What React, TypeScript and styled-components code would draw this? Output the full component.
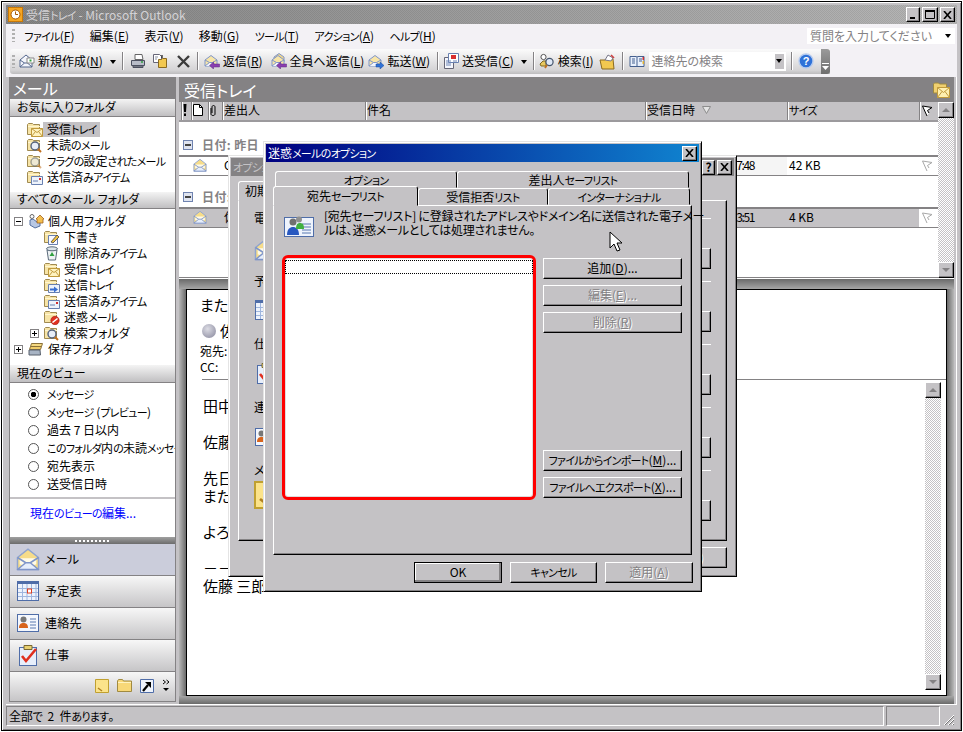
import React from "react";
import styled, { createGlobalStyle, css } from "styled-components";

const Grey = "#c4c2c5";
const Dark = "#848284";
const Chrome = "#f3f1f5";

const GlobalStyle = createGlobalStyle`
  html, body {
    margin: 0;
    background: #fff;
    overflow: hidden;
  }
  body {
    font-family: "Noto Sans CJK JP", "Liberation Sans", sans-serif;
    font-size: 12px;
    line-height: 14px;
    font-feature-settings: "palt";
    color: #000;
  }
  u { text-underline-offset: 1px; }
`;

const raised = css`
  border: 1px solid;
  border-color: #fff #000 #000 #fff;
  box-shadow: inset -1px -1px 0 ${Dark};
  box-sizing: border-box;
  background: ${Grey};
`;

// the bitmap UI font of the reference sets kana much narrower than Noto
const KanaRun = styled.span`
  font-size: 11px;
  letter-spacing: -0.7px;
`;

const Jp = ({ text }: { text: string }) => (
  <>
    {text.split(/([ぁ-んァ-ヶー]+)/).map((part, i) =>
      i % 2 === 1 && part !== "フォルダ" ? <KanaRun key={i}>{part}</KanaRun> : part
    )}
  </>
);

/* ---------- window chrome ---------- */

const Frame = styled.div`
  position: relative;
  width: 961px;
  height: 730px;
  margin: 1px;
  padding: 3px 4px 3px;
  box-sizing: border-box;
  border: 1px solid #000;
  background: ${Grey};
  box-shadow: inset 1px 1px 0 #fff, inset -1px -1px 0 ${Dark};
  display: flex;
  flex-direction: column;
  overflow: hidden;
`;

const TitleBar = styled.div`
  height: 19px;
  flex: none;
  display: flex;
  align-items: center;
  padding-left: 2px;
  gap: 3px;
  color: #d4d2d5;
  background: repeating-conic-gradient(rgba(0, 0, 0, 0.08) 0 25%, transparent 0 50%) 0 0 / 2px 2px,
    linear-gradient(90deg, #858585, #b6b6b6);
`;

const WindowButtons = styled.div`
  margin-left: auto;
  display: flex;
  gap: 2px;
  padding-right: 2px;
`;

const CaptionButton = styled.div<{ $w?: number }>`
  ${raised}
  width: ${(p) => p.$w ?? 15}px;
  height: 15px;
  display: flex;
  align-items: center;
  justify-content: center;
  flex: none;
  font-weight: 700;
  color: #000;
`;

const MenuBar = styled.div`
  height: 24px;
  flex: none;
  display: flex;
  align-items: center;
  background: ${Chrome};
  padding: 0 0 1px 6px;
  box-sizing: border-box;
  gap: 15.4px;
`;

const Grip = styled.div`
  width: 3px;
  height: 13px;
  margin-right: -6px;
  flex: none;
  background: repeating-linear-gradient(180deg, #b0b0b0 0 2px, transparent 2px 4px);
`;

const ToolGrip = styled(Grip)`
  margin-right: 4px;
`;

const HelpBox = styled.div`
  margin-left: auto;
  margin-right: 2px;
  width: 148px;
  height: 16px;
  background: #fff;
  color: ${Dark};
  display: flex;
  align-items: center;
  padding-left: 3px;
  box-sizing: border-box;
`;

const DownArrow = styled.span<{ $flush?: boolean }>`
  width: 0;
  height: 0;
  flex: none;
  border: 3px solid transparent;
  border-top: 4px solid #000;
  border-bottom: 0;
  margin-left: ${(p) => (p.$flush ? "0" : "auto")};
  margin-right: ${(p) => (p.$flush ? "0" : "4px")};
`;

const ToolStrip = styled.div`
  height: 29px;
  flex: none;
  background: ${Chrome};
  padding: 1px 0 3px 4px;
  box-sizing: border-box;
`;

const Toolbar = styled.div`
  width: 820px;
  height: 25px;
  display: flex;
  align-items: center;
  position: relative;
  padding: 0 0 1px 2px;
  box-sizing: border-box;
  border-radius: 3px 0 0 3px;
  background: linear-gradient(180deg, #fbfbfb, #d4d3d5 85%, #bdbcbe);
`;

const ToolButton = styled.div<{ $mr?: number }>`
  display: flex;
  align-items: center;
  gap: 3px;
  margin-right: ${(p) => p.$mr ?? 8}px;
  white-space: nowrap;
  flex: none;
`;

const ToolSep = styled.div<{ $mr?: number }>`
  width: 1px;
  height: 18px;
  background: ${Dark};
  box-shadow: 1px 0 0 #fff;
  margin-right: ${(p) => p.$mr ?? 6}px;
  flex: none;
`;

const ToolArrow = styled.span`
  width: 0;
  height: 0;
  border: 3px solid transparent;
  border-top: 4px solid #000;
  border-bottom: 0;
  margin: 1px 6px 0 0;
  flex: none;
`;

const SearchCombo = styled.div`
  width: 137px;
  height: 19px;
  margin-right: 5px;
  flex: none;
  display: flex;
  align-items: center;
  padding-left: 3px;
  box-sizing: border-box;
  background: #fff;
  color: ${Dark};
`;

const ComboButton = styled.div`
  ${raised}
  margin-left: auto;
  width: 11px;
  height: 17px;
  margin-right: 1px;
  display: flex;
  align-items: center;
  justify-content: center;
  border-color: #fff;
  box-shadow: none;
`;

const ToolbarEnd = styled.div`
  position: absolute;
  right: 0;
  top: 0;
  bottom: 0;
  width: 9px;
  border-radius: 0 3px 3px 0;
  background: linear-gradient(180deg, #9a9a9a, #6f6f6f);
  display: flex;
  align-items: flex-end;
  justify-content: center;
  padding-bottom: 4px;
  box-sizing: border-box;
`;

const Workspace = styled.div`
  flex: 1;
  min-height: 0;
  display: flex;
  padding-left: 3px;
  gap: 3px;
  box-shadow: inset -1px 0 0 #fff;
  padding-right: 3px;
`;

/* ---------- navigation pane ---------- */

const NavPane = styled.div`
  width: 167px;
  height: 625px;
  flex: none;
  box-sizing: border-box;
  border: 1px solid ${Dark};
  border-top: 0;
  display: flex;
  flex-direction: column;
  background: #fff;
`;

const PaneTitle = styled.div<{ $h: number; $pl: number }>`
  height: ${(p) => p.$h}px;
  flex: none;
  padding-left: ${(p) => p.$pl}px;
  display: flex;
  align-items: center;
  background: ${Dark};
  color: #fff;
  font-size: 16px;
`;

const FolderBadge = styled.span`
  margin-left: auto;
  margin-right: 4px;
  display: flex;
`;

const SectionHeader = styled.div<{ $h?: number }>`
  height: ${(p) => p.$h ?? 18}px;
  flex: none;
  box-sizing: border-box;
  display: flex;
  align-items: center;
  padding: 0 0 2px 7px;
  border-bottom: 1px solid ${Dark};
  background: linear-gradient(180deg, #f4f4f4, #c0bfc1);
`;

const FolderList = styled.div<{ $h: number; $pt: number }>`
  height: ${(p) => p.$h}px;
  flex: none;
  box-sizing: border-box;
  padding-top: ${(p) => p.$pt}px;
`;

const FavRow = styled.div`
  height: 16px;
  display: flex;
  align-items: center;
  padding-left: 17px;
`;

const RowLabel = styled.span<{ $selected?: boolean }>`
  padding: 0 3px 1px 4px;
  white-space: nowrap;
  background: ${(p) => (p.$selected ? Grey : "transparent")};
`;

const TreeRow = styled.div<{ $level: number }>`
  height: 16px;
  display: flex;
  align-items: center;
  padding-left: ${(p) => (p.$level ? 20 : 4)}px;
  white-space: nowrap;
`;

const Expander = styled.span<{ $hidden?: boolean; $open?: boolean }>`
  width: 9px;
  height: 9px;
  flex: none;
  margin-right: 5px;
  box-sizing: border-box;
  border: ${(p) => (p.$hidden ? "0" : `1px solid ${Dark}`)};
  background: ${(p) =>
    p.$hidden
      ? "none"
      : p.$open
      ? "linear-gradient(#000,#000) center/5px 1px no-repeat"
      : "linear-gradient(#000,#000) center/5px 1px no-repeat, linear-gradient(#000,#000) center/1px 5px no-repeat"};
`;

const ViewList = styled.div`
  height: 116px;
  flex: none;
  box-sizing: border-box;
  padding-top: 2px;
  border-bottom: 2px solid ${Grey};
  overflow: hidden;
`;

const ViewRow = styled.div`
  height: 18px;
  display: flex;
  align-items: center;
  padding-left: 18px;
  gap: 8px;
  white-space: nowrap;
`;

const Radio = styled.span<{ $on?: boolean }>`
  width: 11px;
  height: 11px;
  flex: none;
  border-radius: 50%;
  box-sizing: border-box;
  border: 1px solid #555;
  background: ${(p) =>
    p.$on ? "radial-gradient(circle, #000 0 2.5px, #fff 3px)" : "#fff"};
`;

const ViewLink = styled.div`
  height: 38px;
  flex: none;
  box-sizing: border-box;
  padding: 7px 0 0 20px;
  color: #0000ff;
`;

const NavSplitter = styled.div`
  height: 7px;
  flex: none;
  display: flex;
  align-items: center;
  justify-content: center;
  background: linear-gradient(180deg, #a0a0a0, #6c6c6c);
`;

const SplitterDots = styled.span`
  width: 35px;
  height: 2px;
  background: repeating-linear-gradient(90deg, #fff 0 2px, transparent 2px 4px);
`;

const NavButton = styled.div<{ $active?: boolean }>`
  height: 32px;
  flex: none;
  box-sizing: border-box;
  display: flex;
  align-items: center;
  padding: 0 0 1px 6px;
  gap: 5px;
  letter-spacing: 0.3px;
  border-bottom: 1px solid ${Dark};
  background: ${(p) =>
    p.$active ? "#cbcddb" : "linear-gradient(180deg, #f7f7f7, #c6c5c7)"};
`;

const NavBottom = styled.div`
  flex: 1;
  display: flex;
  align-items: center;
  justify-content: flex-end;
  gap: 8px;
  padding: 0 5px 2px 0;
  background: linear-gradient(180deg, #f7f7f7, #c6c5c7);
`;

/* ---------- main area ---------- */

const Main = styled.div`
  width: 775px;
  flex: none;
  display: flex;
  flex-direction: column;
  background: #fff;
`;

const columns = css`
  display: grid;
  grid-template-columns: 10px 17px 14px 143px 280px 142px 132px 19px;
`;

const ListPane = styled.div`
  height: 176px;
  flex: none;
  display: flex;
`;

const ListColumn = styled.div`
  flex: 1;
  min-width: 0;
  display: flex;
  flex-direction: column;
`;

const HeaderRow = styled.div`
  ${columns}
  height: 20px;
  flex: none;
  padding-left: 2px;
  box-sizing: border-box;
  background: ${Grey};
  border-bottom: 2px solid #9c9a9d;
`;

const HeaderCell = styled.div`
  display: flex;
  align-items: center;
  gap: 7px;
  padding: 0 0 2px 2px;
  box-sizing: border-box;
  white-space: nowrap;
  overflow: hidden;
  box-shadow: inset 1px 0 0 ${Dark}, inset 2px 0 0 #fff;
`;

const Rows = styled.div`
  flex: 1;
  padding-top: 15px;
  border-bottom: 1px solid ${Dark};
`;

const GroupRow = styled.div<{ $mt?: number }>`
  height: 18px;
  margin-top: ${(p) => p.$mt ?? 0}px;
  box-sizing: border-box;
  display: flex;
  align-items: center;
  padding: 0 0 2px 4px;
  gap: 9px;
  color: ${Dark};
  font-weight: 700;
  letter-spacing: 0.4px;
`;

const GroupToggle = styled.span`
  width: 10px;
  height: 10px;
  box-sizing: border-box;
  border: 1px solid #6f83b0;
  background: linear-gradient(#444, #444) center/6px 2px no-repeat, #dfe4f0;
`;

const MailRow = styled.div<{ $selected?: boolean }>`
  ${columns}
  height: 21px;
  box-sizing: border-box;
  padding-left: 2px;
  border-top: 2px solid ${Dark};
  border-bottom: 1px solid ${Dark};
  background: ${(p) => (p.$selected ? Grey : "#fff")};
`;

const MailCell = styled.div<{ $bg?: string; $right?: boolean }>`
  display: flex;
  align-items: center;
  white-space: nowrap;
  overflow: hidden;
  padding: 0 0 2px 2px;
  box-sizing: border-box;
  background: ${(p) => p.$bg ?? "transparent"};
  ${(p) => p.$right && "justify-content: flex-end; padding-right: 33px; letter-spacing: -1.4px;"}
`;

const ScrollTrack = styled.div<{ $mr?: number; $mb?: number }>`
  width: 16px;
  flex: none;
  display: flex;
  flex-direction: column;
  margin-right: ${(p) => p.$mr ?? 0}px;
  margin-bottom: ${(p) => p.$mb ?? 0}px;
  background: repeating-conic-gradient(${Grey} 0 25%, #fff 0 50%) 0 0 / 2px 2px;
`;

const ScrollButton = styled.div<{ $down?: boolean }>`
  ${raised}
  height: 16px;
  flex: none;
  display: flex;
  align-items: center;
  justify-content: center;
  margin-top: ${(p) => (p.$down ? "auto" : "0")};
`;

const ScrollGlyph = styled.span<{ $down?: boolean }>`
  width: 0;
  height: 0;
  border: 4px solid transparent;
  ${(p) =>
    p.$down
      ? `border-top: 4px solid ${Dark}; border-bottom: 0;`
      : `border-bottom: 4px solid ${Dark}; border-top: 0;`}
`;

const PreviewWell = styled.div`
  flex: 1;
  min-height: 0;
  padding: 10px 7px 8px;
  background: linear-gradient(180deg, #6a6a6a, #a6a6a6) top / 100% 10px no-repeat,
    linear-gradient(0deg, #6a6a6a, #a6a6a6) bottom / 100% 8px no-repeat,
    linear-gradient(90deg, #b8b8b8, #6a6a6a) left / 7px 100% no-repeat,
    linear-gradient(270deg, #b8b8b8, #6a6a6a) right / 7px 100% no-repeat;
  border-top: 1px solid #fff;
`;

const PreviewBox = styled.div`
  height: 100%;
  box-sizing: border-box;
  border: 1px solid #000;
  background: #fff;
  display: flex;
  flex-direction: column;
`;

const PreviewHead = styled.div`
  height: 92px;
  flex: none;
  box-sizing: border-box;
  padding: 5px 0 0 13px;
`;

const Subject = styled.div`
  font-size: 15px;
  line-height: 20px;
  height: 20px;
`;

const Sender = styled.div`
  margin: 7px 0 3px 2px;
  height: 18px;
  display: flex;
  align-items: center;
  gap: 4px;
  font-size: 15px;
`;

const PresenceDot = styled.span`
  width: 14px;
  height: 14px;
  border-radius: 50%;
  background: radial-gradient(circle at 40% 35%, #dcdce4, #85859a);
`;

const MetaLine = styled.div`
  height: 16px;
  line-height: 16px;
`;

const HeadRule = styled.div`
  height: 1px;
  margin: 4px 0 0 2px;
  background: ${Dark};
`;

const PreviewBody = styled.div`
  flex: 1;
  min-height: 0;
  display: flex;
`;

const BodyText = styled.div`
  flex: 1;
  padding: 15px 0 0 16px;
  font-size: 15px;
  line-height: 18px;
  white-space: pre-line;
`;

/* ---------- status bar ---------- */

const StatusBar = styled.div`
  height: 23px;
  flex: none;
  display: flex;
  align-items: flex-end;
  gap: 2px;
  padding-bottom: 1px;
  box-sizing: border-box;
  border-top: 1px solid #fff;
`;

const StatusPanel = styled.div<{ $w?: number }>`
  ${(p) => (p.$w ? `width: ${p.$w}px; flex: none;` : "flex: 1;")}
  height: 20px;
  box-sizing: border-box;
  border: 1px solid;
  border-color: ${Dark} #fff #fff ${Dark};
  display: flex;
  align-items: center;
  padding-left: 2px;
`;

const StatusText = styled.span`
  letter-spacing: -0.2px;
  word-spacing: 3px;
`;

const Resizer = styled.div`
  width: 15px;
  height: 18px;
  flex: none;
  display: flex;
  align-items: flex-end;
`;

/* ---------- dialogs ---------- */

const Dialog = styled.div<{ $x: number; $y: number; $w: number; $h: number }>`
  position: absolute;
  isolation: isolate;
  left: ${(p) => p.$x - 2}px;
  top: ${(p) => p.$y - 2}px;
  width: ${(p) => p.$w}px;
  height: ${(p) => p.$h}px;
  box-sizing: border-box;
  background: ${Grey};
  border: 1px solid;
  border-color: #e4e4e4 #000 #000 #e4e4e4;
  box-shadow: inset 1px 1px 0 #fff, inset -1px -1px 0 ${Dark};
  padding: 2px;
  display: flex;
  flex-direction: column;
`;

const DialogTitle = styled.div<{ $active?: boolean }>`
  height: 18px;
  flex: none;
  display: flex;
  align-items: center;
  padding: 0 2px;
  gap: 2px;
  overflow: hidden;
  white-space: nowrap;
  color: ${(p) => (p.$active ? "#fff" : Grey)};
  background: ${(p) =>
    p.$active ? "linear-gradient(90deg, #000080, #1084d0)" : "#848284"};
`;

const TitleText = styled.span`
  flex: 1;
`;

const TabsRow = styled.div<{ $pl: number; $mt?: number }>`
  display: flex;
  padding-left: ${(p) => p.$pl}px;
  margin-top: ${(p) => p.$mt ?? 0}px;
  flex: none;
`;

const Tab = styled.div<{ $w: number; $active?: boolean; $flat?: boolean }>`
  width: ${(p) => p.$w}px;
  height: ${(p) => (p.$active ? 20 : 17)}px;
  margin-top: ${(p) => (p.$active && !p.$flat ? -2 : 0)}px;
  margin-bottom: ${(p) => (p.$active ? -1 : 0)}px;
  position: relative;
  z-index: ${(p) => (p.$active ? 2 : 0)};
  flex: none;
  box-sizing: border-box;
  display: flex;
  align-items: center;
  justify-content: center;
  white-space: nowrap;
  background: ${Grey};
  border: 1px solid;
  border-color: #fff #000 transparent #fff;
  border-radius: 3px 3px 0 0;
`;

const TabPage = styled.div<{ $w: number; $h: number; $ml: number }>`
  width: ${(p) => p.$w}px;
  height: ${(p) => p.$h}px;
  margin-left: ${(p) => p.$ml}px;
  flex: none;
  box-sizing: border-box;
  border: 1px solid;
  border-color: #fff #000 #000 #fff;
  box-shadow: inset -1px -1px 0 ${Dark};
  display: flex;
  flex-direction: column;
`;

const IntroRow = styled.div`
  height: 49px;
  flex: none;
  display: flex;
  gap: 10px;
  padding: 5px 0 0 10px;
  box-sizing: border-box;
`;

const IntroIcon = styled.div`
  margin-top: 3px;
`;

const IntroText = styled.div`
  margin-top: -2px;
  line-height: 14px;
  letter-spacing: -0.25px;
  white-space: nowrap;
`;

const ListRow = styled.div`
  display: flex;
  gap: 7px;
  padding-left: 8px;
`;

const RedFrame = styled.div`
  width: 254px;
  height: 245px;
  flex: none;
  box-sizing: border-box;
  border: 3px solid #f00;
  border-radius: 6px;
  background: #fff;
  box-shadow: inset 0 0 0 1px #ddd;
  padding: 2px 0;
`;

const FocusRow = styled.div`
  height: 14px;
  box-sizing: border-box;
  border: 1px dotted #000;
`;

const ButtonColumn = styled.div`
  width: 139px;
  flex: none;
  display: flex;
  flex-direction: column;
  justify-content: space-between;
  padding: 3px 0 2px;
`;

const ButtonGroup = styled.div`
  display: flex;
  flex-direction: column;
  gap: 6px;
`;

const WinButton = styled.div<{ $w?: number; $disabled?: boolean; $default?: boolean }>`
  ${raised}
  width: ${(p) => p.$w ?? 139}px;
  height: 21px;
  flex: none;
  display: flex;
  align-items: center;
  justify-content: center;
  padding-bottom: 1px;
  white-space: pre;
  ${(p) => p.$disabled && `color: ${Dark}; text-shadow: 1px 1px 0 #fff;`}
  ${(p) =>
    p.$default &&
    `outline: 1px solid #000; outline-offset: -1px; box-shadow: inset -2px -2px 0 ${Dark}, inset 1px 1px 0 #fff;`}
`;

const DialogFooter = styled.div<{ $pr: number; $mt: number }>`
  display: flex;
  justify-content: flex-end;
  gap: 8px;
  margin-top: ${(p) => p.$mt}px;
  padding-right: ${(p) => p.$pr}px;
`;

const BackTabPage = styled(TabPage)`
  padding: 10px 15px 0 15px;
`;

const OptSection = styled.div`
  height: 63px;
  flex: none;
`;

const OptHeading = styled.div`
  height: 14px;
  display: flex;
  align-items: center;
  gap: 6px;
  white-space: nowrap;
`;

const OptRule = styled.span`
  flex: 1;
  height: 1px;
  background: #fff;
`;

const OptBody = styled.div`
  height: 44px;
  display: flex;
  justify-content: space-between;
  align-items: flex-end;
`;

const OptIcon = styled.div<{ $mt: number }>`
  align-self: flex-start;
  margin-top: ${(p) => p.$mt}px;
`;

const Cursor = styled.svg`
  position: absolute;
  left: 606px;
  top: 229px;
`;

/* ---------- drawings ---------- */

type FolderKind = "plain" | "mail" | "search" | "searchDim" | "sent" | "draft" | "out" | "junk";

const FolderIcon = ({ kind = "plain" }: { kind?: FolderKind }) => (
  <svg width="16" height="16" viewBox="0 0 16 16" style={{ flex: "none" }}>
    <path d="M.5 3.5l1-1h4l1 1h6v10H.5z" fill="#f7e4a6" stroke="#a08a50" />
    <path d="M1 5.5h12" stroke="#fff6d0" />
    {kind === "mail" && (
      <g>
        <path d="M4.5 7.5h11v8h-11z" fill="#fff3c0" stroke="#c09a3c" />
        <path d="M4.5 7.5l5.5 4 5.5-4M4.5 15.5l4-5M15.5 15.5l-4-5" fill="none" stroke="#c09a3c" />
      </g>
    )}
    {(kind === "search" || kind === "searchDim") && (
      <g opacity={kind === "searchDim" ? 0.55 : 1}>
        <circle cx="8" cy="9" r="4" fill="#e8eef8" stroke="#54627c" strokeWidth="1.4" />
        <path d="M11 12l3 3" stroke="#c07020" strokeWidth="2" />
      </g>
    )}
    {kind === "sent" && (
      <g>
        <path d="M4.5 7.5h11v8h-11z" fill="#eef3fb" stroke="#6880b0" />
        <path d="M6 12h5" stroke="#6880b0" />
        <path d="M12 9h2v2h-2z" fill="#d03030" />
      </g>
    )}
    {kind === "draft" && (
      <g>
        <path d="M4.5 6.5h9v9h-9z" fill="#f8f8ff" stroke="#6880b0" />
        <path d="M7 13l6-7 2 2-6 6z" fill="#f0c040" stroke="#444" strokeWidth=".8" />
      </g>
    )}
    {kind === "out" && (
      <g>
        <path d="M4.5 7.5h11v8h-11z" fill="#eef3fb" stroke="#6880b0" />
        <path d="M6 13.5v-2h4v-2l4 3-4 3v-2z" fill="#3a6fd0" />
      </g>
    )}
    {kind === "junk" && (
      <g>
        <circle cx="11" cy="11.5" r="4.2" fill="#e03020" stroke="#a01810" strokeWidth=".6" />
        <path d="M8.5 13.5l5-4" stroke="#fff" strokeWidth="1.6" />
      </g>
    )}
  </svg>
);

const TrashIcon = () => (
  <svg width="16" height="16" viewBox="0 0 16 16" style={{ flex: "none" }}>
    <path d="M3 5l1.5 10h7L13 5z" fill="#eef2f4" stroke="#5a6a7a" />
    <ellipse cx="8" cy="3.8" rx="5.5" ry="2" fill="#dce4ea" stroke="#5a6a7a" />
    <path d="M8 7l2.5 4h-5z" fill="#30a040" />
  </svg>
);

const PersonalIcon = () => (
  <svg width="16" height="16" viewBox="0 0 16 16" style={{ flex: "none" }}>
    <circle cx="4" cy="3.5" r="2" fill="#fff" stroke="#666" />
    <path d="M2 12V7l3-1 4 3 3-1v5l-5 2z" fill="#b8c8e4" stroke="#5570a0" />
    <path d="M8 6l4-4 4 4-1 0v4H9V6z" fill="#f4c050" stroke="#a06020" strokeWidth=".8" />
  </svg>
);

const ArchiveIcon = () => (
  <svg width="16" height="16" viewBox="0 0 16 16" style={{ flex: "none" }}>
    <path d="M3.5 2.5h11l-1 3h-11z" fill="#f4d880" stroke="#8a7038" />
    <path d="M2.5 5.5h11l-1 3h-11z" fill="#f0cc68" stroke="#8a7038" />
    <path d="M1 9h11l.5 5H1z" fill="#a8b4c4" stroke="#58606c" />
  </svg>
);

const EnvelopeOpen = ({ size = 14 }: { size?: number }) => (
  <svg width={size} height={size} viewBox="0 0 16 16" style={{ flex: "none" }}>
    <path d="M1 7l7-5.5L15 7v8H1z" fill="#f6dc8a" stroke="#8fa4d0" />
    <path d="M2.5 7.5h11v4l-5.5 2-5.5-2z" fill="#fffbe8" />
    <path d="M1 15l5.5-4.5h3L15 15zM1 7l5.5 3.5M15 7l-5.5 3.5" fill="#e6eefb" stroke="#7f95c8" strokeLinejoin="round" />
  </svg>
);

const NewMailIcon = () => (
  <svg width="16" height="16" viewBox="0 0 16 16" style={{ flex: "none" }}>
    <path d="M1 7l6-5 6 5v7H1z" fill="#f4f6fc" stroke="#55688f" />
    <path d="M1 14l4.5-4h3L13 14M1 7l4.5 3M13 7L8.5 10" fill="none" stroke="#55688f" />
    <path d="M8 5h7v5H8z" fill="#fff" stroke="#888" />
    <path d="M10.5 6.5h2v2h-2z" fill="#30a040" />
  </svg>
);

const PrintIcon = () => (
  <svg width="16" height="16" viewBox="0 0 16 16" style={{ flex: "none" }}>
    <path d="M5 1.5h7l1 5H5z" fill="#fff" stroke="#666" />
    <path d="M1.5 7.5h13v5h-13z" fill="#b8bcc8" stroke="#4c5060" />
    <path d="M3 12.5h10v2H3z" fill="#707480" stroke="#4c5060" />
    <path d="M11 9h2" stroke="#30a040" strokeWidth="1.4" />
  </svg>
);

const MoveFolderIcon = () => (
  <svg width="16" height="16" viewBox="0 0 16 16" style={{ flex: "none" }}>
    <path d="M1.5 1.5h6l2 2v6h-8z" fill="#fff" stroke="#667" />
    <path d="M6.5 6.5h3l1-1h4v9h-8z" fill="#f2c850" stroke="#8a6a20" />
    <path d="M3 4h3M3 6h2" stroke="#8890a0" />
    <path d="M10 2v3" stroke="#333" strokeWidth="1.4" />
  </svg>
);

const DeleteIcon = () => (
  <svg width="15" height="15" viewBox="0 0 15 15" style={{ flex: "none" }}>
    <path d="M2 2l11 11M13 2L2 13" stroke="#3c3c3c" strokeWidth="2.4" />
  </svg>
);

const ReplyIcon = ({ arrow, all }: { arrow: "left" | "right"; all?: boolean }) => (
  <svg width="16" height="16" viewBox="0 0 16 16" style={{ flex: "none" }}>
    {all && <path d="M3 4l5-3.5L13 4v5H3z" fill="#f2d88a" stroke="#7f95c8" />}
    <path d="M1 7l6-4.5L13 7v6H1z" fill="#f8e6a8" stroke="#7f95c8" />
    <path d="M1 13l4.5-3.5h3L13 13M1 7l4.5 2.5M13 7L8.5 9.5" fill="#f0f4fd" stroke="#7f95c8" />
    {arrow === "left" ? (
      <path d="M15.5 11v3h-6v2l-4-3.5 4-3.5v2z" fill="#8a3fb0" stroke="#5c2880" strokeWidth=".5" />
    ) : (
      <path d="M8 11v3h4v2l4-3.5-4-3.5v2z" fill="#2f72d8" stroke="#1c4c98" strokeWidth=".5" />
    )}
  </svg>
);

const SendReceiveIcon = () => (
  <svg width="16" height="16" viewBox="0 0 16 16" style={{ flex: "none" }}>
    <path d="M1.5 4.5h9v11h-9z" fill="#f4f6fc" stroke="#667" />
    <path d="M5.5 .5h10v9h-10z" fill="#fff" stroke="#6880b0" />
    <path d="M8 2h5v4H8z" fill="#d83030" />
    <path d="M3 8h5M3 10h5M3 12h5M10 8h4" stroke="#7088b8" />
  </svg>
);

const FindIcon = () => (
  <svg width="16" height="16" viewBox="0 0 16 16" style={{ flex: "none" }}>
    <circle cx="4.5" cy="4" r="2.6" fill="#fff" stroke="#555" />
    <path d="M1 11l3-3h3v5H2z" fill="#e8c860" stroke="#806a20" />
    <circle cx="10.5" cy="9" r="3.6" fill="#dfe8f6" stroke="#44546c" strokeWidth="1.2" />
    <path d="M8 12l-2 3" stroke="#c07020" strokeWidth="1.8" />
  </svg>
);

const FolderSearchIcon = () => (
  <svg width="17" height="17" viewBox="0 0 17 17" style={{ flex: "none" }}>
    <path d="M3 16l-2-9h5l1-1h7l1 10z" fill="#f2c850" stroke="#8a6a20" />
    <path d="M6 7l3-5 5 3-2 3z" fill="#fff" stroke="#778" />
    <path d="M12 2l3 3" stroke="#d04040" strokeWidth="1.6" />
  </svg>
);

const BookIcon = () => (
  <svg width="16" height="16" viewBox="0 0 16 16" style={{ flex: "none" }}>
    <path d="M1 3.5h6.5l.5 1 .5-1H15v10H1z" fill="#e8f0fc" stroke="#45608f" />
    <path d="M8 4.5v9" stroke="#45608f" />
    <path d="M3 6h3M3 8h3M3 10h3M10 6h3M10 8h3" stroke="#45608f" />
    <path d="M13.5 4h1.5v3h-1.5z" fill="#d03030" />
    <path d="M13.5 8h1.5v3h-1.5z" fill="#e0b030" />
  </svg>
);

const HelpIcon = () => (
  <svg width="16" height="16" viewBox="0 0 16 16" style={{ flex: "none" }}>
    <circle cx="8" cy="8" r="7" fill="#2f72d8" stroke="#b8ccee" strokeWidth="1.4" />
    <text x="8" y="12" textAnchor="middle" fontSize="11" fontWeight="700" fill="#fff" fontFamily="Liberation Sans">?</text>
  </svg>
);

const OutlookIcon = () => (
  <svg width="15" height="15" viewBox="0 0 15 15" style={{ flex: "none" }}>
    <rect x=".5" y=".5" width="14" height="14" fill="#f5a623" stroke="#c87808" />
    <circle cx="7.5" cy="7.5" r="4.5" fill="#fff" stroke="#a85808" />
    <path d="M7.5 4.5v3h2.5" fill="none" stroke="#a85808" />
  </svg>
);

const CalendarIcon = () => (
  <svg width="24" height="24" viewBox="0 0 24 24" style={{ flex: "none" }}>
    <rect x="1.5" y="2.5" width="21" height="19" fill="#eef3fc" stroke="#4f6da8" />
    <path d="M1.5 2h21v3h-21z" fill="#4f6da8" />
    <path d="M2 9.5h20M2 13.5h20M2 17.5h20M6.5 5v16M11 5v16M15.5 5v16M20 5v16" stroke="#9fb6de" />
    <rect x="11.5" y="10" width="4" height="4" fill="#fff" stroke="#e04020" />
  </svg>
);

const ContactIcon = () => (
  <svg width="24" height="24" viewBox="0 0 24 24" style={{ flex: "none" }}>
    <rect x="1.5" y="3.5" width="21" height="17" fill="#f4f7fd" stroke="#4f6da8" />
    <circle cx="7.5" cy="8.5" r="3" fill="#777" />
    <path d="M3 17c0-4 2-5 4.5-5s4.500 1 4.500 5z" fill="#d8641c" />
    <path d="M14 8h6M14 11h6M14 14h6M14 17h6" stroke="#5878b0" />
  </svg>
);

const TasksIcon = () => (
  <svg width="24" height="24" viewBox="0 0 24 24" style={{ flex: "none" }}>
    <rect x="3.5" y="4.5" width="17" height="18" fill="#e8effb" stroke="#4f6da8" />
    <path d="M8 2.5h8v4H8z" fill="#e8d070" stroke="#7a6830" />
    <path d="M6 13l4 5L20 6" fill="none" stroke="#e03020" strokeWidth="2.6" />
  </svg>
);

const NoteIcon = ({ size = 14 }: { size?: number }) => (
  <svg width={size} height={size} viewBox="0 0 14 14" style={{ flex: "none" }}>
    <path d="M.5.5h13v13h-13z" fill="#fbe38a" stroke="#c0a030" />
    <path d="M3 9l4 3" stroke="#b08020" strokeWidth="1.4" />
  </svg>
);

const SmallFolderIcon = () => (
  <svg width="15" height="13" viewBox="0 0 15 13">
    <path d="M.5 2l1-1.5h4l1 1.5h8v10.5H.5z" fill="#f8d878" stroke="#a08a40" />
    <path d="M1 3.5h13" stroke="#fff3c0" />
  </svg>
);

const ShortcutIcon = () => (
  <svg width="14" height="14" viewBox="0 0 14 14">
    <path d="M.5.5h13v13h-13z" fill="#eef3fb" stroke="#4f6da8" />
    <path d="M3 12l5-6" stroke="#000" strokeWidth="2.2" />
    <path d="M5 3h6v6z" fill="#000" />
  </svg>
);

const MoreIcon = () => (
  <svg width="8" height="14" viewBox="0 0 8 14">
    <path d="M1 1l2.5 2L1 5M4.5 1L7 3 4.5 5" fill="none" stroke="#000" />
    <path d="M1 9h6l-3 3z" fill="#000" />
  </svg>
);

const FlagIcon = ({ c = "#a8a8a8" }: { c?: string }) => (
  <svg width="12" height="13" viewBox="0 0 12 13" style={{ flex: "none" }}>
    <path d="M6 12L1.5 2 11 3.5 6.5 6.5 8 9" fill="#fff" stroke={c} />
  </svg>
);

const MailFolderBadge = () => (
  <svg width="17" height="16" viewBox="0 0 17 16" style={{ flex: "none" }}>
    <path d="M.5 2l1-1h4l1 1h7v9H.5z" fill="#f0d070" stroke="#a08a40" />
    <path d="M4.5 5.5h12v10h-12z" fill="#fff0b0" stroke="#c09a3c" />
    <path d="M4.5 5.5l6 5 6-5M4.5 15.5l4.5-6M16.5 15.5l-4.5-6" fill="none" stroke="#c09a3c" />
  </svg>
);

const SafeListIcon = () => (
  <svg width="30" height="24" viewBox="0 0 30 24" style={{ flex: "none" }}>
    <rect x=".5" y="3.5" width="29" height="19" fill="#eef3fc" stroke="#4f6da8" />
    <path d="M18 10h9M18 13h9M18 16h9M18 19h9" stroke="#5878b0" />
    <circle cx="9" cy="8" r="3.5" fill="#707070" />
    <path d="M3 21c0-6 3-8 6-8s6 2 6 8z" fill="#2858c0" />
    <circle cx="15" cy="5.5" r="3" fill="#909090" />
    <path d="M12 15c0-4 1-6 4-6s4 2 4 6z" fill="#40b040" />
  </svg>
);

const PaperClipIcon = () => (
  <svg width="7" height="13" viewBox="0 0 7 13">
    <path d="M1 4v6c0 2 4 2 4 0V3C5 1 2 1 2 3v6" fill="none" stroke="#000" />
  </svg>
);

const DocIcon = () => (
  <svg width="10" height="12" viewBox="0 0 10 12">
    <path d="M.5.5h6l3 3v8h-9z" fill="#fff" stroke="#000" />
    <path d="M6.5.5v3h3" fill="none" stroke="#000" />
  </svg>
);

const BangIcon = () => (
  <svg width="4" height="12" viewBox="0 0 4 12">
    <path d="M.5 0h3L3 8H1zM1 9.5h2V12H1z" fill="#000" />
  </svg>
);

const SortGlyph = () => (
  <svg width="9" height="8" viewBox="0 0 9 8">
    <path d="M.5.5h8L4.5 7.5z" fill="#e4e4e4" stroke="#8c8c8c" />
  </svg>
);

const GripLines = () => (
  <svg width="13" height="13" viewBox="0 0 13 13">
    <path d="M2 12L12 2M6 12l6-6M10 12l2-2" stroke="#fff" />
    <path d="M3 12L12 3M7 12l5-5M11 12l1-1" stroke="#777" />
  </svg>
);

const CloseGlyph = () => (
  <svg width="9" height="8" viewBox="0 0 9 8">
    <path d="M1 0l7 8M8 0L1 8" stroke="#000" strokeWidth="1.6" />
  </svg>
);

/* ---------- data ---------- */

const favourites: { kind: FolderKind; label: string; selected?: boolean }[] = [
  { kind: "mail", label: "受信トレイ", selected: true },
  { kind: "search", label: "未読のメール" },
  { kind: "searchDim", label: "フラグの設定されたメール" },
  { kind: "sent", label: "送信済みアイテム" },
];

const subFolders: { kind: FolderKind; label: string; expander?: boolean }[] = [
  { kind: "draft", label: "下書き" },
  { kind: "plain", label: "削除済みアイテム" },
  { kind: "mail", label: "受信トレイ" },
  { kind: "out", label: "送信トレイ" },
  { kind: "sent", label: "送信済みアイテム" },
  { kind: "junk", label: "迷惑メール" },
  { kind: "search", label: "検索フォルダ", expander: true },
];

const views = [
  "メッセージ",
  "メッセージ (プレビュー)",
  "過去 7 日以内",
  "このフォルダ内の未読メッセージ",
  "宛先表示",
  "送受信日時",
];

const optionSections = [
  { label: "電子メール", mt: 12, icon: <EnvelopeOpen size={24} />, button: "メール設定(E)..." },
  { label: "予定表", mt: 10, icon: <CalendarIcon />, button: "予定表(C)..." },
  { label: "仕事", mt: 10, icon: <TasksIcon />, button: "仕事(T)..." },
  { label: "連絡先", mt: 11, icon: <ContactIcon />, button: "連絡先(O)..." },
  { label: "メモ", mt: 4, icon: <NoteIcon size={28} />, button: "メモ(M)..." },
];

export default function App() {
  return (
    <>
      <GlobalStyle />
      <Frame>
        <TitleBar>
          <OutlookIcon />
          <span><Jp text="受信トレイ" /> - Microsoft Outlook</span>
          <WindowButtons>
            <CaptionButton $w={14}>
              <svg width="8" height="8" viewBox="0 0 8 8"><path d="M1 6h5v2H1z" /></svg>
            </CaptionButton>
            <CaptionButton $w={16}>
              <svg width="10" height="9" viewBox="0 0 10 9"><path d="M.5 1.5h9v7h-9z" fill="none" stroke="#000" /><path d="M0 0h10v2H0z" /></svg>
            </CaptionButton>
            <CaptionButton>
              <CloseGlyph />
            </CaptionButton>
          </WindowButtons>
        </TitleBar>

        <MenuBar>
          <Grip />
          <span><Jp text="ファイル" />(<u>F</u>)</span>
          <span>編集(<u>E</u>)</span>
          <span>表示(<u>V</u>)</span>
          <span>移動(<u>G</u>)</span>
          <span><Jp text="ツール" />(<u>T</u>)</span>
          <span><Jp text="アクション" />(<u>A</u>)</span>
          <span><Jp text="ヘルプ" />(<u>H</u>)</span>
          <HelpBox>
            質問を入力してください
            <DownArrow />
          </HelpBox>
        </MenuBar>

        <ToolStrip>
          <Toolbar>
            <ToolGrip />
            <ToolButton $mr={7}>
              <NewMailIcon />
              <span>新規作成(<u>N</u>)</span>
            </ToolButton>
            <ToolArrow />
            <ToolSep $mr={7} />
            <ToolButton $mr={6}><PrintIcon /></ToolButton>
            <ToolButton><MoveFolderIcon /></ToolButton>
            <ToolButton $mr={6}><DeleteIcon /></ToolButton>
            <ToolSep />
            <ToolButton>
              <ReplyIcon arrow="left" />
              <span>返信(<u>R</u>)</span>
            </ToolButton>
            <ToolButton $mr={4}>
              <ReplyIcon arrow="left" all />
              <span>全員へ返信(<u>L</u>)</span>
            </ToolButton>
            <ToolButton $mr={7}>
              <ReplyIcon arrow="right" />
              <span>転送(<u>W</u>)</span>
            </ToolButton>
            <ToolSep $mr={5} />
            <ToolButton $mr={7}>
              <SendReceiveIcon />
              <span>送受信(<u>C</u>)</span>
            </ToolButton>
            <ToolArrow />
            <ToolSep $mr={5} />
            <ToolButton $mr={5}>
              <FindIcon />
              <span>検索(<u>I</u>)</span>
            </ToolButton>
            <ToolButton $mr={6}><FolderSearchIcon /></ToolButton>
            <ToolSep />
            <ToolButton $mr={4}><BookIcon /></ToolButton>
            <SearchCombo>
              連絡先の検索
              <ComboButton><DownArrow $flush /></ComboButton>
            </SearchCombo>
            <ToolSep />
            <ToolButton><HelpIcon /></ToolButton>
            <ToolbarEnd>
              <svg width="7" height="7" viewBox="0 0 7 7">
                <path d="M0 0h7v1H0z" fill="#fff" />
                <path d="M0 3h7L3.5 7z" fill="#fff" />
              </svg>
            </ToolbarEnd>
          </Toolbar>
        </ToolStrip>

        <Workspace>
          <NavPane>
            <PaneTitle $h={22} $pl={3}>メール</PaneTitle>
            <SectionHeader>お気に入りフォルダ</SectionHeader>
            <FolderList $h={75} $pt={4}>
              {favourites.map((f) => (
                <FavRow key={f.label}>
                  <FolderIcon kind={f.kind} />
                  <RowLabel $selected={f.selected}><Jp text={f.label} /></RowLabel>
                </FavRow>
              ))}
            </FolderList>
            <SectionHeader $h={17}>すべてのメール フォルダ</SectionHeader>
            <FolderList $h={156} $pt={4}>
              <TreeRow $level={0}>
                <Expander $open />
                <PersonalIcon />
                <RowLabel>個人用フォルダ</RowLabel>
              </TreeRow>
              {subFolders.map((f) => (
                <TreeRow $level={1} key={f.label}>
                  <Expander $hidden={!f.expander} />
                  {f.label === "削除済みアイテム" ? <TrashIcon /> : <FolderIcon kind={f.kind} />}
                  <RowLabel><Jp text={f.label} /></RowLabel>
                </TreeRow>
              ))}
              <TreeRow $level={0}>
                <Expander />
                <ArchiveIcon />
                <RowLabel>保存フォルダ</RowLabel>
              </TreeRow>
            </FolderList>
            <SectionHeader>現在のビュー</SectionHeader>
            <ViewList>
              {views.map((v, i) => (
                <ViewRow key={v}>
                  <Radio $on={i === 0} />
                  <span><Jp text={v} /></span>
                </ViewRow>
              ))}
            </ViewList>
            <ViewLink><Jp text="現在のビューの編集..." /></ViewLink>
            <NavSplitter><SplitterDots /></NavSplitter>
            <NavButton $active>
              <EnvelopeOpen size={24} />
              メール
            </NavButton>
            <NavButton><CalendarIcon />予定表</NavButton>
            <NavButton><ContactIcon />連絡先</NavButton>
            <NavButton><TasksIcon />仕事</NavButton>
            <NavBottom>
              <NoteIcon />
              <SmallFolderIcon />
              <ShortcutIcon />
              <MoreIcon />
            </NavBottom>
          </NavPane>

          <Main>
            <PaneTitle $h={25} $pl={5}>
              受信トレイ
              <FolderBadge><MailFolderBadge /></FolderBadge>
            </PaneTitle>
            <ListPane>
              <ListColumn>
                <HeaderRow>
                  <HeaderCell><BangIcon /></HeaderCell>
                  <HeaderCell><DocIcon /></HeaderCell>
                  <HeaderCell><PaperClipIcon /></HeaderCell>
                  <HeaderCell>差出人</HeaderCell>
                  <HeaderCell>件名</HeaderCell>
                  <HeaderCell>受信日時 <SortGlyph /></HeaderCell>
                  <HeaderCell><span><Jp text="サイズ" /></span></HeaderCell>
                  <HeaderCell><FlagIcon c="#000" /></HeaderCell>
                </HeaderRow>
                <Rows>
                  <GroupRow><GroupToggle />日付: 昨日</GroupRow>
                  <MailRow>
                    <MailCell />
                    <MailCell><EnvelopeOpen /></MailCell>
                    <MailCell />
                    <MailCell>Outlook</MailCell>
                    <MailCell>Microsoft Outlook テスト メッセージ</MailCell>
                    <MailCell $bg="#f5f5f5" $right>昨日 17:48</MailCell>
                    <MailCell>42 KB</MailCell>
                    <MailCell><FlagIcon /></MailCell>
                  </MailRow>
                  <GroupRow $mt={13}><GroupToggle />日付: 先週</GroupRow>
                  <MailRow $selected>
                    <MailCell />
                    <MailCell><EnvelopeOpen /></MailCell>
                    <MailCell />
                    <MailCell>佐藤 三郎</MailCell>
                    <MailCell>先日はありがとうございました</MailCell>
                    <MailCell $right>先週 13:51</MailCell>
                    <MailCell>4 KB</MailCell>
                    <MailCell $bg="#fff"><FlagIcon /></MailCell>
                  </MailRow>
                </Rows>
              </ListColumn>
              <ScrollTrack>
                <ScrollButton><ScrollGlyph /></ScrollButton>
                <ScrollButton $down><ScrollGlyph $down /></ScrollButton>
              </ScrollTrack>
            </ListPane>

            <PreviewWell>
              <PreviewBox>
                <PreviewHead>
                  <Subject>またよろしくお願いします</Subject>
                  <Sender><PresenceDot />佐藤 三郎</Sender>
                  <MetaLine>宛先: 田中 一郎</MetaLine>
                  <MetaLine>CC:</MetaLine>
                  <HeadRule />
                </PreviewHead>
                <PreviewBody>
                  <BodyText>
                    {"田中様\n\n佐藤です。\n\n先日はありがとうございました。\nまたお会いしましょう。\n\nよろしくお願いします。\n\n－－－－－\n佐藤 三郎"}
                  </BodyText>
                  <ScrollTrack $mr={5} $mb={5}>
                    <ScrollButton><ScrollGlyph /></ScrollButton>
                    <ScrollButton $down><ScrollGlyph $down /></ScrollButton>
                  </ScrollTrack>
                </PreviewBody>
              </PreviewBox>
            </PreviewWell>
          </Main>
        </Workspace>

        <StatusBar>
          <StatusPanel><StatusText><Jp text="全部で 2 件あります。" /></StatusText></StatusPanel>
          <StatusPanel $w={54} />
          <Resizer><GripLines /></Resizer>
        </StatusBar>

        <Dialog $x={228} $y={155} $w={509} $h={422}>
          <DialogTitle>
            <TitleText><Jp text="オプション" /></TitleText>
            <CaptionButton $w={13}>?</CaptionButton>
            <CaptionButton><CloseGlyph /></CaptionButton>
          </DialogTitle>
          <TabsRow $pl={7} $mt={5}>
            <Tab $w={62} $active $flat>初期設定</Tab>
          </TabsRow>
          <BackTabPage $w={489} $h={341} $ml={7}>
            {optionSections.map((s) => (
              <OptSection key={s.label}>
                <OptHeading>{s.label}<OptRule /></OptHeading>
                <OptBody>
                  <OptIcon $mt={s.mt}>{s.icon}</OptIcon>
                  <WinButton $w={140}>{s.button}</WinButton>
                </OptBody>
              </OptSection>
            ))}
          </BackTabPage>
          <DialogFooter $pr={7} $mt={6}>
            <WinButton $w={87}>OK</WinButton>
            <WinButton $w={87}><Jp text="キャンセル" /></WinButton>
            <WinButton $w={87} $disabled>適用(<u>A</u>)</WinButton>
          </DialogFooter>
        </Dialog>

        <Dialog $x={263} $y={141} $w={439} $h={451}>
          <DialogTitle $active>
            <TitleText><Jp text="迷惑メールのオプション" /></TitleText>
            <CaptionButton><CloseGlyph /></CaptionButton>
          </DialogTitle>
          <TabsRow $pl={9} $mt={9}>
            <Tab $w={182}><Jp text="オプション" /></Tab>
            <Tab $w={232}><Jp text="差出人セーフリスト" /></Tab>
          </TabsRow>
          <TabsRow $pl={7}>
            <Tab $w={145} $active><Jp text="宛先セーフリスト" /></Tab>
            <Tab $w={130}><Jp text="受信拒否リスト" /></Tab>
            <Tab $w={142}><Jp text="インターナショナル" /></Tab>
          </TabsRow>
          <TabPage $w={419} $h={350} $ml={7}>
            <IntroRow>
              <IntroIcon><SafeListIcon /></IntroIcon>
              <IntroText>
                [宛先セーフリスト] に登録されたアドレスやドメイン名に送信された電子メー
                <br />
                ルは、迷惑メールとしては処理されません。
              </IntroText>
            </IntroRow>
            <ListRow>
              <RedFrame><FocusRow /></RedFrame>
              <ButtonColumn>
                <ButtonGroup>
                  <WinButton>追加(<u>D</u>)...</WinButton>
                  <WinButton $disabled>編集(<u>E</u>)...</WinButton>
                  <WinButton $disabled>削除(<u>R</u>)</WinButton>
                </ButtonGroup>
                <ButtonGroup>
                  <WinButton><Jp text="ファイルからインポート" />(<u>M</u>)...</WinButton>
                  <WinButton><Jp text="ファイルへエクスポート" />(<u>X</u>)...</WinButton>
                </ButtonGroup>
              </ButtonColumn>
            </ListRow>
          </TabPage>
          <DialogFooter $pr={6} $mt={7}>
            <WinButton $w={88} $default>OK</WinButton>
            <WinButton $w={87}><Jp text="キャンセル" /></WinButton>
            <WinButton $w={88} $disabled>適用(<u>A</u>)</WinButton>
          </DialogFooter>
        </Dialog>

        <Cursor width="14" height="22" viewBox="0 0 14 22">
          <path d="M2 1v16l4-4 3 7 3-1-3-7h5z" fill="#fff" stroke="#000" />
        </Cursor>
      </Frame>
    </>
  );
}
